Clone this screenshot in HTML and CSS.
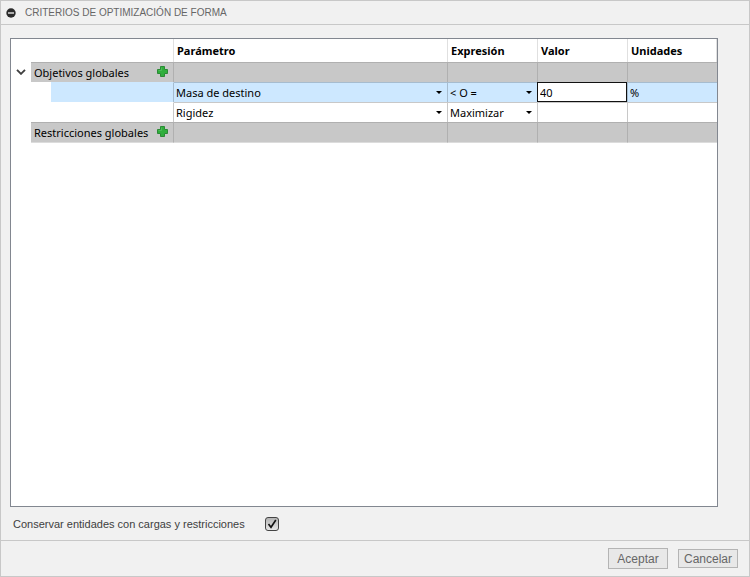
FILE: index.html
```html
<!DOCTYPE html>
<html lang="es">
<head>
  <meta charset="UTF-8">
  <meta name="viewport" content="width=device-width, initial-scale=1.0">
  <title>Criterios de optimización de forma</title>
  <link rel="stylesheet" href="styles.css">
</head>
<body>
  <form class="dialog">
    <header class="titlebar">
      <button type="button" class="collapse" aria-label="Contraer">
        <svg width="10" height="10" viewBox="0 0 10 10"><circle cx="5" cy="5" r="4.7" fill="#2b2b2b"/><path d="M2 5h6" stroke="#e6e6e6" stroke-width="1.4"/></svg>
      </button>
      <h1>CRITERIOS DE OPTIMIZACIÓN DE FORMA</h1>
    </header>
    <main class="content">
      <div class="panel">
        <table class="criteria">
          <colgroup>
            <col class="col-toggle">
            <col class="col-indent">
            <col class="col-name">
            <col>
            <col class="col-field">
            <col class="col-field">
            <col class="col-unit">
          </colgroup>
          <thead>
            <tr>
              <td colspan="3"></td>
              <th>Parámetro</th>
              <th>Expresión</th>
              <th>Valor</th>
              <th>Unidades</th>
            </tr>
          </thead>
          <tbody>
            <tr class="group">
              <td class="tree">
                <button type="button" class="toggle" aria-label="Objetivos globales">
                  <svg width="10" height="6" viewBox="0 0 10 6"><path d="M1 .8l4 4 4-4" fill="none" stroke="#404040" stroke-width="1.9"/></svg>
                </button>
              </td>
              <td colspan="2">
                <div class="group-name">
                  <span>Objetivos globales</span>
                  <button type="button" class="add" aria-label="Añadir objetivo">
                    <svg width="11" height="11" viewBox="0 0 11 11"><path d="M3.5 .5h4v3h3v4h-3v3h-4v-3h-3v-4h3z" fill="#2fae3c" stroke="#2b8a35" stroke-linejoin="round"/><path d="M4.5 1.5v3h-3" fill="none" stroke="#4cbc56"/></svg>
                  </button>
                </div>
              </td>
              <td></td>
              <td></td>
              <td></td>
              <td></td>
            </tr>
            <tr class="selected">
              <td class="tree"></td>
              <td class="tree"></td>
              <td class="name"></td>
              <td>
                <div class="combo">
                  <select aria-label="Parámetro"><option>Masa de destino</option></select>
                </div>
              </td>
              <td>
                <div class="combo">
                  <select aria-label="Expresión"><option>&lt; O =</option></select>
                </div>
              </td>
              <td class="value"><input type="text" value="40" aria-label="Valor"></td>
              <td>%</td>
            </tr>
            <tr>
              <td class="tree"></td>
              <td class="tree"></td>
              <td class="name"></td>
              <td>
                <div class="combo">
                  <select aria-label="Parámetro"><option>Rigidez</option></select>
                </div>
              </td>
              <td>
                <div class="combo">
                  <select aria-label="Expresión"><option>Maximizar</option></select>
                </div>
              </td>
              <td></td>
              <td></td>
            </tr>
            <tr class="group">
              <td class="tree"></td>
              <td colspan="2">
                <div class="group-name">
                  <span>Restricciones globales</span>
                  <button type="button" class="add" aria-label="Añadir restricción">
                    <svg width="11" height="11" viewBox="0 0 11 11"><path d="M3.5 .5h4v3h3v4h-3v3h-4v-3h-3v-4h3z" fill="#2fae3c" stroke="#2b8a35" stroke-linejoin="round"/><path d="M4.5 1.5v3h-3" fill="none" stroke="#4cbc56"/></svg>
                  </button>
                </div>
              </td>
              <td></td>
              <td></td>
              <td></td>
              <td></td>
            </tr>
          </tbody>
        </table>
      </div>
      <div class="option">
        <label for="keep">Conservar entidades con cargas y restricciones</label>
        <span class="check">
          <input type="checkbox" id="keep" checked>
          <svg width="14" height="14" viewBox="0 0 14 14"><path d="M3.5 7l2.5 3.3L10.8 3" fill="none" stroke="#111" stroke-width="1.6"/></svg>
        </span>
      </div>
    </main>
    <footer class="actions">
      <button type="submit" class="btn btn-ok">Aceptar</button>
      <button type="button" class="btn">Cancelar</button>
    </footer>
  </form>
</body>
</html>
```

FILE: styles.css
```css
* {
  box-sizing: border-box;
  margin: 0;
  padding: 0;
}
body {
  font-family: "Liberation Sans", Arial, sans-serif;
  font-size: 11px;
  color: #404040;
}
button {
  border: none;
  background: none;
  font: inherit;
}
svg {
  display: block;
}
.dialog {
  display: flex;
  flex-direction: column;
  min-height: 100vh;
  border: 1px solid #c8c8c8;
  background-color: #f1f1f1;
}

/* title */
.titlebar {
  display: flex;
  align-items: center;
  gap: 9px;
  height: 24px;
  padding-left: 5px;
  border-bottom: 1px solid #c8c8c8;
}
.titlebar h1 {
  font-size: 10px;
  font-weight: normal;
  color: #666;
}

/* table */
.content {
  flex: 1;
  display: flex;
  flex-direction: column;
  padding: 13px 31px 0 9px;
}
.panel {
  flex: 1;
  border: 1px solid #828790;
  background-color: #fff;
}
.criteria {
  width: 100%;
  table-layout: fixed;
  border-collapse: separate;
  border-spacing: 0;
  font-family: "Noto Sans", "Open Sans", sans-serif;
  font-size: 11px;
  line-height: 19px;
  color: #000;
}
.col-toggle,
.col-indent {
  width: 20px;
}
.col-name {
  width: 123px;
}
.col-field {
  width: 90px;
}
.col-unit {
  width: 89px;
}
.criteria thead {
  line-height: 23px;
}
.criteria th,
.criteria td {
  height: 20px;
  text-align: left;
  white-space: nowrap;
  border-right: 1px solid #c8c8c8;
}
.criteria thead th,
.criteria thead td {
  height: 23px;
  padding-left: 3px;
  border-color: #e0e0e0;
}
.criteria tbody td {
  padding-left: 2px;
  border-top: 1px solid #c8c8c8;
}
.criteria .group td {
  background-color: #c8c8c8;
  border-color: #b0b0b0;
}
.criteria tbody tr:last-child td {
  border-bottom: 1px solid #dcdcdc;
}
.criteria tbody .name {
  border-top-color: transparent;
}
.criteria .selected td {
  background-color: #cde8ff;
  border-top-color: #a6bccf;
  border-right-color: #a6bccf;
}
.criteria .selected .name {
  border-top-color: #cde8ff;
}
.criteria tbody td:last-child {
  border-right: none;
}
.criteria tbody tr .tree,
.criteria tbody tr:last-child .tree {
  padding: 0;
  border: none;
  background: none;
}
.toggle {
  display: block;
  padding: 0 5px;
}
.group-name {
  display: flex;
  justify-content: space-between;
  padding: 0 5px 0 1px;
}
.add {
  height: 17px;
}
.combo {
  display: flex;
  align-items: center;
  padding-right: 5px;
}
.combo::after {
  content: "";
  border: 3px solid transparent;
  border-top-color: #000;
  border-bottom: none;
}
.combo select {
  flex: 1;
  min-width: 0;
  height: 19px;
  appearance: none;
  border: none;
  background: none;
  font: inherit;
  color: inherit;
}
.criteria .selected .value {
  padding: 0;
}
/* the edit box covers the grid lines of its cell */
.value input {
  display: block;
  width: calc(100% + 1px);
  height: 20px;
  margin: -1px 0 0 -1px;
  padding: 1px 0 0 2px;
  border: 1px solid #111;
  outline: none;
  font-family: inherit;
  font-size: 11px;
}

/* checkbox and buttons */
.option {
  display: flex;
  align-items: center;
  gap: 20px;
  height: 33px;
  padding-left: 3px;
}
.check {
  display: grid;
}
.check input,
.check svg {
  grid-area: 1 / 1;
}
.check svg {
  pointer-events: none;
}
.check input {
  width: 14px;
  height: 14px;
  appearance: none;
  border: 1px solid #444;
  border-radius: 3px;
  background: linear-gradient(#b4b4b4, #e6e6e6);
}
.check input:not(:checked) + svg {
  visibility: hidden;
}
.actions {
  display: flex;
  align-items: center;
  justify-content: flex-end;
  gap: 10px;
  height: 36px;
  padding-right: 11px;
  border-top: 1px solid #c8c8c8;
}
.btn {
  width: 60px;
  height: 19px;
  border: 1px solid #b4b4b4;
  background-color: #e8e8e8;
  font-size: 12px;
  color: #666;
}
.btn-ok {
  height: 21px;
}
```
